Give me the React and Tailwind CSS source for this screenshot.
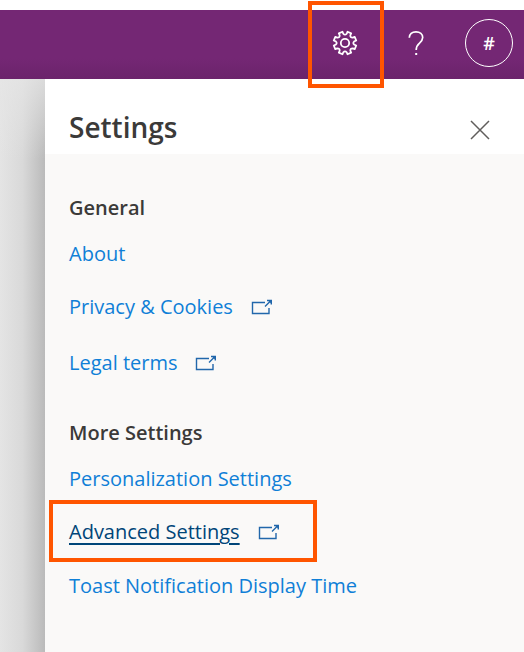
const generalLinks = [
  { label: 'About', height: 'h-[52px]' },
  { label: 'Privacy & Cookies', external: true, height: 'h-[54px]' },
  { label: 'Legal terms', external: true, height: 'h-[58px]' },
];

const moreLinks = [
  { label: 'Personalization Settings', height: 'h-[52px]' },
  { label: 'Advanced Settings', external: true, active: true, height: 'h-[54px]' },
  { label: 'Toast Notification Display Time', height: 'h-[54px]' },
];

// Outline of an eight-toothed gear centred on the origin.
function gearPath() {
  const point = (radius, degrees) => {
    const a = (degrees * Math.PI) / 180;
    return `${(radius * Math.cos(a)).toFixed(2)} ${(radius * Math.sin(a)).toFixed(2)}`;
  };
  let d = '';
  for (let i = 0; i < 8; i += 1) {
    const c = 22.5 + i * 45;
    d += `${i === 0 ? 'M' : 'L'}${point(9.4, c - 12)}L${point(11.5, c - 10)}L${point(11.5, c + 10)}L${point(9.4, c + 12)}Q${point(7.4, c + 22.5)} ${point(9.4, c + 33)}`;
  }
  return `${d}Z`;
}

function GearIcon() {
  return (
    <svg className="size-[26px]" viewBox="-13 -13 26 26" fill="none" stroke="white" strokeWidth="1.8" strokeLinejoin="round" aria-hidden="true">
      <path d={gearPath()} />
      <circle r="4.2" />
    </svg>
  );
}

function HelpIcon() {
  return (
    <svg className="h-[26px] w-[18px]" viewBox="0 0 18 26" fill="none" stroke="white" strokeWidth="1.7" aria-hidden="true">
      <path d="M2.3 7.8C2.3 4 5 1.8 9 1.8s6.7 2.3 6.7 5.8c0 2.8-1.6 4.2-3.4 5.8C10.2 15.2 9.2 16.4 9.2 20" />
      <path d="M8.2 24h2" strokeWidth="2" />
    </svg>
  );
}

function ExternalIcon() {
  return (
    <svg className="h-4 w-[22px]" viewBox="0 0 22 16" fill="none" stroke="#2167ab" strokeWidth="1.4" aria-hidden="true">
      <path d="M14 3.5H1.5v11h16.5V9" />
      <path d="M14 7.5L20 1.5M16 1.5h4.3v4" />
      <path d="M17 1.5h3.3v3.3z" fill="#2167ab" stroke="none" />
    </svg>
  );
}

function LinkRow({ label, external, active, height }) {
  return (
    <li className={`relative flex items-center ${height}`}>
      <a href="#" className={`flex items-center gap-[18px] ${active ? 'text-[#004578]' : 'text-[#0f7fd7]'}`}>
        <span className={active ? 'underline decoration-2 underline-offset-4' : ''}>{label}</span>
        {external && <ExternalIcon />}
      </a>
      {active && <span className="pointer-events-none absolute -left-5 -top-[5px] h-[62px] w-[268px] border-4 border-[#ff5500]" />}
    </li>
  );
}

function Section({ title, links, className }) {
  return (
    <section className={className}>
      <h2 className="flex h-10 items-center font-semibold text-[#3b3a39]">{title}</h2>
      <ul>
        {links.map((link) => (
          <LinkRow key={link.label} {...link} />
        ))}
      </ul>
    </section>
  );
}

export default function App() {
  return (
    <div className="flex min-h-screen flex-col bg-white pt-2.5 font-['Open_Sans','Noto_Sans',sans-serif] text-xl">
      <header className="flex h-[69px] items-center justify-end bg-linear-to-b from-[#742774] from-70% to-[#6b236b] pr-[11px] text-white">
        <button type="button" aria-label="Settings" className="relative flex h-full w-[76px] items-center justify-center pr-0.5 pb-[3px]">
          <GearIcon />
          <span className="pointer-events-none absolute -top-[9px] left-0 h-[87px] w-[76px] border-4 border-[#ff5500]" />
        </button>
        <button type="button" aria-label="Help" className="flex h-full w-[65px] items-center justify-center pr-0.5 pb-[3px]">
          <HelpIcon />
        </button>
        <button type="button" aria-label="Account" className="mb-[3px] ml-4 flex size-12 items-center justify-center rounded-full border border-white text-lg font-semibold">
          #
        </button>
      </header>
      <div className="flex grow">
        <div className="w-[45px] shrink-0 bg-linear-to-r from-[#e4e4e4] via-[#d9d9d9] to-[#bababa]">
          <div className="h-20 bg-linear-to-b from-[#e6e6e6]/75 to-transparent" />
        </div>
        <main className="flex grow flex-col bg-[#faf9f8]">
          <div className="flex h-[75px] items-center justify-between bg-white pl-6 pr-[33px] pt-5">
            <h1 className="text-[28px] leading-9 font-semibold text-[#3b3a39]">Settings</h1>
            <button type="button" aria-label="Close" className="pt-1">
              <svg className="size-[22px]" viewBox="0 0 22 22" stroke="#605e5c" strokeWidth="1.5" aria-hidden="true">
                <path d="M2 3l18 18M20 3L2 21" />
              </svg>
            </button>
          </div>
          <Section title="General" links={generalLinks} className="pl-6 pt-[34px]" />
          <Section title="More Settings" links={moreLinks} className="pl-6 pt-[21px]" />
        </main>
      </div>
    </div>
  );
}
